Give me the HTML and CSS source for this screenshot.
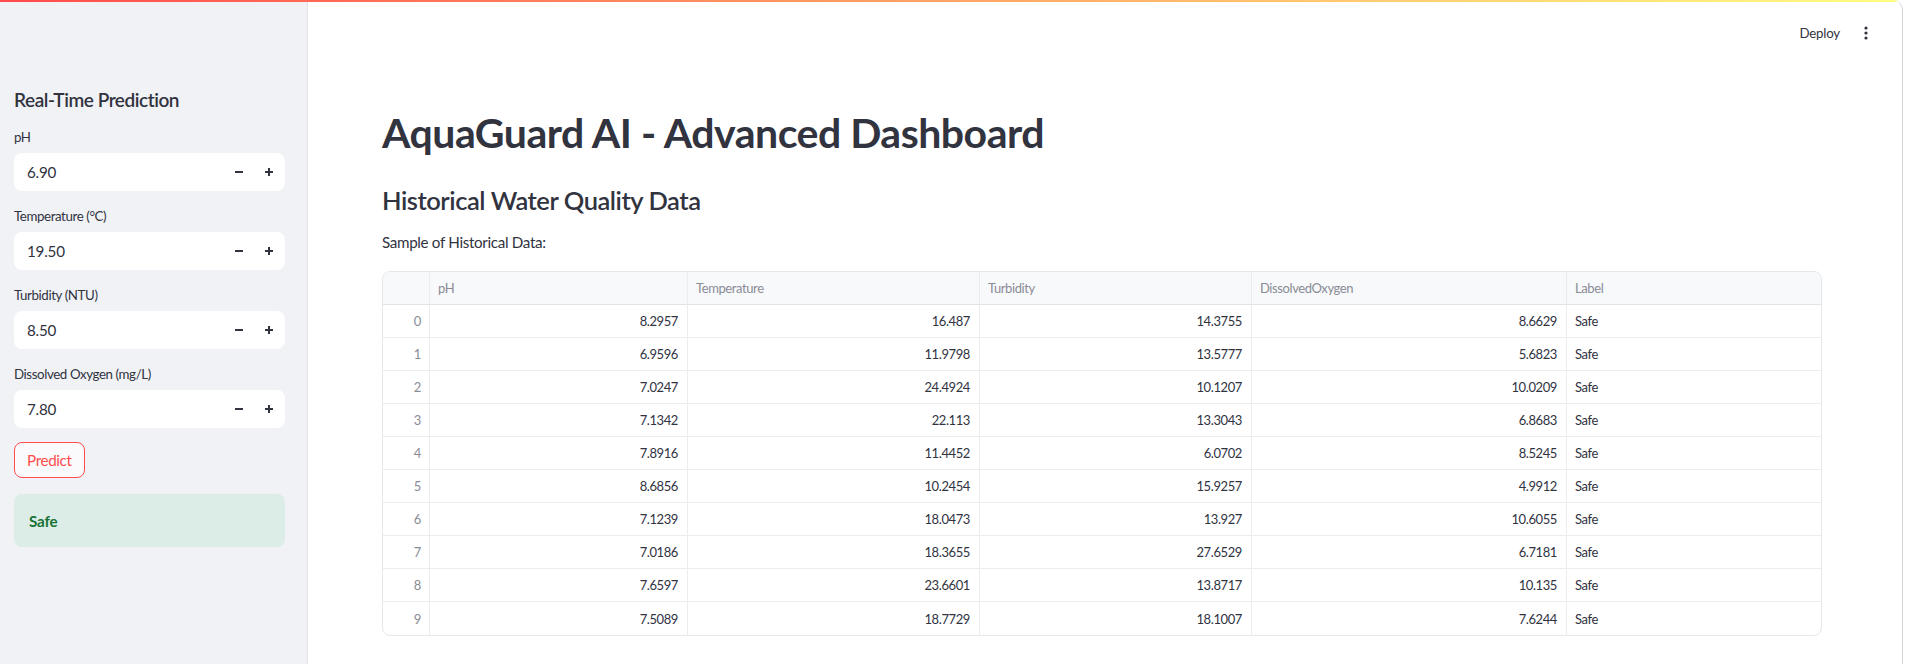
FILE: index.html
```html
<!DOCTYPE html>
<html lang="en">
<head>
<meta charset="utf-8">
<title>AquaGuard AI - Advanced Dashboard</title>
<link rel="stylesheet" href="styles.css">
</head>
<body>
<div class="app">
  <div class="decoration"></div>
  <aside class="sidebar">
    <h2 class="side-title">Real-Time Prediction</h2>
    <div class="field">
      <div class="field-label">pH</div>
      <div class="num-input">
        <span class="num-value">6.90</span>
        <span class="step"><svg width="10" height="10" viewBox="0 0 10 10"><rect x="1" y="4" width="8" height="2" fill="#31333f"/></svg></span>
        <span class="step"><svg width="10" height="10" viewBox="0 0 10 10"><rect x="1" y="4" width="8" height="2" fill="#31333f"/><rect x="4" y="1" width="2" height="8" fill="#31333f"/></svg></span>
      </div>
    </div>
    <div class="field">
      <div class="field-label">Temperature (°C)</div>
      <div class="num-input">
        <span class="num-value">19.50</span>
        <span class="step"><svg width="10" height="10" viewBox="0 0 10 10"><rect x="1" y="4" width="8" height="2" fill="#31333f"/></svg></span>
        <span class="step"><svg width="10" height="10" viewBox="0 0 10 10"><rect x="1" y="4" width="8" height="2" fill="#31333f"/><rect x="4" y="1" width="2" height="8" fill="#31333f"/></svg></span>
      </div>
    </div>
    <div class="field">
      <div class="field-label">Turbidity (NTU)</div>
      <div class="num-input">
        <span class="num-value">8.50</span>
        <span class="step"><svg width="10" height="10" viewBox="0 0 10 10"><rect x="1" y="4" width="8" height="2" fill="#31333f"/></svg></span>
        <span class="step"><svg width="10" height="10" viewBox="0 0 10 10"><rect x="1" y="4" width="8" height="2" fill="#31333f"/><rect x="4" y="1" width="2" height="8" fill="#31333f"/></svg></span>
      </div>
    </div>
    <div class="field">
      <div class="field-label">Dissolved Oxygen (mg/L)</div>
      <div class="num-input">
        <span class="num-value">7.80</span>
        <span class="step"><svg width="10" height="10" viewBox="0 0 10 10"><rect x="1" y="4" width="8" height="2" fill="#31333f"/></svg></span>
        <span class="step"><svg width="10" height="10" viewBox="0 0 10 10"><rect x="1" y="4" width="8" height="2" fill="#31333f"/><rect x="4" y="1" width="2" height="8" fill="#31333f"/></svg></span>
      </div>
    </div>
    <button class="predict">Predict</button>
    <div class="alert-success">Safe</div>
  </aside>
  <main class="main">
    <header class="topbar">
      <span class="deploy">Deploy</span>
      <span class="kebab"><svg width="16" height="16" viewBox="0 0 16 16"><circle cx="8" cy="3" r="1.6" fill="#31333f"/><circle cx="8" cy="8" r="1.6" fill="#31333f"/><circle cx="8" cy="13" r="1.6" fill="#31333f"/></svg></span>
    </header>
    <div class="content">
      <h1 class="title">AquaGuard AI - Advanced Dashboard</h1>
      <h3 class="subheader">Historical Water Quality Data</h3>
      <p class="caption">Sample of Historical Data:</p>
      <div class="dataframe">
        <div class="cell head"></div><div class="cell head">pH</div><div class="cell head">Temperature</div><div class="cell head">Turbidity</div><div class="cell head">DissolvedOxygen</div><div class="cell head last">Label</div>
        <div class="cell idx">0</div><div class="cell num">8.2957</div><div class="cell num">16.487</div><div class="cell num">14.3755</div><div class="cell num">8.6629</div><div class="cell txt last">Safe</div>
        <div class="cell idx">1</div><div class="cell num">6.9596</div><div class="cell num">11.9798</div><div class="cell num">13.5777</div><div class="cell num">5.6823</div><div class="cell txt last">Safe</div>
        <div class="cell idx">2</div><div class="cell num">7.0247</div><div class="cell num">24.4924</div><div class="cell num">10.1207</div><div class="cell num">10.0209</div><div class="cell txt last">Safe</div>
        <div class="cell idx">3</div><div class="cell num">7.1342</div><div class="cell num">22.113</div><div class="cell num">13.3043</div><div class="cell num">6.8683</div><div class="cell txt last">Safe</div>
        <div class="cell idx">4</div><div class="cell num">7.8916</div><div class="cell num">11.4452</div><div class="cell num">6.0702</div><div class="cell num">8.5245</div><div class="cell txt last">Safe</div>
        <div class="cell idx">5</div><div class="cell num">8.6856</div><div class="cell num">10.2454</div><div class="cell num">15.9257</div><div class="cell num">4.9912</div><div class="cell txt last">Safe</div>
        <div class="cell idx">6</div><div class="cell num">7.1239</div><div class="cell num">18.0473</div><div class="cell num">13.927</div><div class="cell num">10.6055</div><div class="cell txt last">Safe</div>
        <div class="cell idx">7</div><div class="cell num">7.0186</div><div class="cell num">18.3655</div><div class="cell num">27.6529</div><div class="cell num">6.7181</div><div class="cell txt last">Safe</div>
        <div class="cell idx">8</div><div class="cell num">7.6597</div><div class="cell num">23.6601</div><div class="cell num">13.8717</div><div class="cell num">10.135</div><div class="cell txt last">Safe</div>
        <div class="cell idx bottom">9</div><div class="cell num bottom">7.5089</div><div class="cell num bottom">18.7729</div><div class="cell num bottom">18.1007</div><div class="cell num bottom">7.6244</div><div class="cell txt last bottom">Safe</div>
      </div>
    </div>
  </main>
</div>
</body>
</html>
```
FILE: styles.css
```css
* { box-sizing: border-box; }

html, body {
  margin: 0;
  padding: 0;
  background: #ffffff;
}

body {
  font-family: Lato, "Liberation Sans", Arial, sans-serif;
  color: #31333f;
}

.app {
  position: relative;
  display: flex;
  width: calc(100% - 3px);
  height: 664px;
  overflow: hidden;
  border-right: 1px solid #d4d4d6;
  border-top-right-radius: 10px;
  background: #ffffff;
}

.decoration {
  position: absolute;
  top: 0;
  left: 0;
  right: 0;
  height: 2px;
  background: linear-gradient(90deg, #ff4b4b, #fffd80);
  z-index: 5;
}

/* Sidebar */
.sidebar {
  flex: 0 0 308px;
  background: #f0f2f6;
  border-right: 1px solid #e1e2e6;
  padding: 86px 22px 0 14px;
  display: flex;
  flex-direction: column;
}

.side-title {
  margin: 0 0 13px;
  font-size: 19px;
  line-height: 28px;
  font-weight: 600;
  letter-spacing: -0.45px;
  color: #31333f;
}

.field {
  display: flex;
  flex-direction: column;
  gap: 6px;
  margin-bottom: 15px;
}

.field-label {
  font-size: 13.3px;
  line-height: 20px;
  letter-spacing: -0.4px;
}

.num-input {
  display: flex;
  align-items: center;
  height: 38px;
  background: #ffffff;
  border-radius: 8px;
  padding: 0 1px 0 13px;
}

.num-value {
  flex: 1;
  font-size: 15.2px;
  letter-spacing: -0.2px;
}

.step {
  width: 30px;
  height: 36px;
  display: flex;
  align-items: center;
  justify-content: center;
}

.predict {
  align-self: flex-start;
  margin-top: -1px;
  height: 36px;
  padding: 0 12px;
  border: 1px solid #ff4b4b;
  border-radius: 8px;
  background: #fafafc;
  color: #ff4b4b;
  font-family: inherit;
  font-size: 15.2px;
  letter-spacing: -0.35px;
}

.alert-success {
  margin-top: 16px;
  height: 53px;
  display: flex;
  align-items: center;
  padding: 0 15px;
  border-radius: 8px;
  background: #dbede6;
  color: #177233;
  font-size: 15.2px;
  font-weight: 700;
  letter-spacing: -0.2px;
}

/* Main */
.main {
  flex: 1;
  display: flex;
  flex-direction: column;
  min-width: 0;
}

.topbar {
  height: 66px;
  display: flex;
  align-items: center;
  justify-content: flex-end;
  gap: 18px;
  padding-right: 28px;
}

.deploy {
  font-size: 13.3px;
  letter-spacing: -0.2px;
  color: #31333f;
}

.kebab {
  display: flex;
  width: 16px;
  height: 16px;
}

.content {
  padding: 41px 80px 0 74px;
}

.title {
  margin: 0 0 23px;
  font-size: 41px;
  line-height: 52px;
  font-weight: 700;
  letter-spacing: -0.5px;
  color: #31333f;
}

.subheader {
  margin: 0 0 12px;
  font-size: 25.5px;
  line-height: 36px;
  font-weight: 600;
  letter-spacing: -0.45px;
  color: #31333f;
}

.caption {
  margin: 0 0 17px;
  font-size: 15.2px;
  line-height: 24px;
  letter-spacing: -0.33px;
}

.dataframe {
  display: grid;
  grid-template-columns: 47px 258px 292px 272px 315px 1fr;
  grid-auto-rows: 33px;
  width: 1440px;
  border: 1px solid #e6e7ea;
  border-radius: 8px;
  overflow: hidden;
  font-size: 13px;
  letter-spacing: -0.4px;
}

.cell {
  display: flex;
  align-items: center;
  padding: 0 8px;
  border-right: 1px solid #ebecef;
  border-bottom: 1px solid #ebecef;
  white-space: nowrap;
  color: #31333f;
}

.cell.last { border-right: none; }
.cell.bottom { border-bottom: none; }

.cell.head {
  background: #f8f9fb;
  color: #8a8c96;
  border-bottom-color: #e3e4e8;
}

.cell.idx {
  justify-content: flex-end;
  color: #8a8c96;
}

.cell.num {
  justify-content: flex-end;
  padding-right: 9px;
}
```
